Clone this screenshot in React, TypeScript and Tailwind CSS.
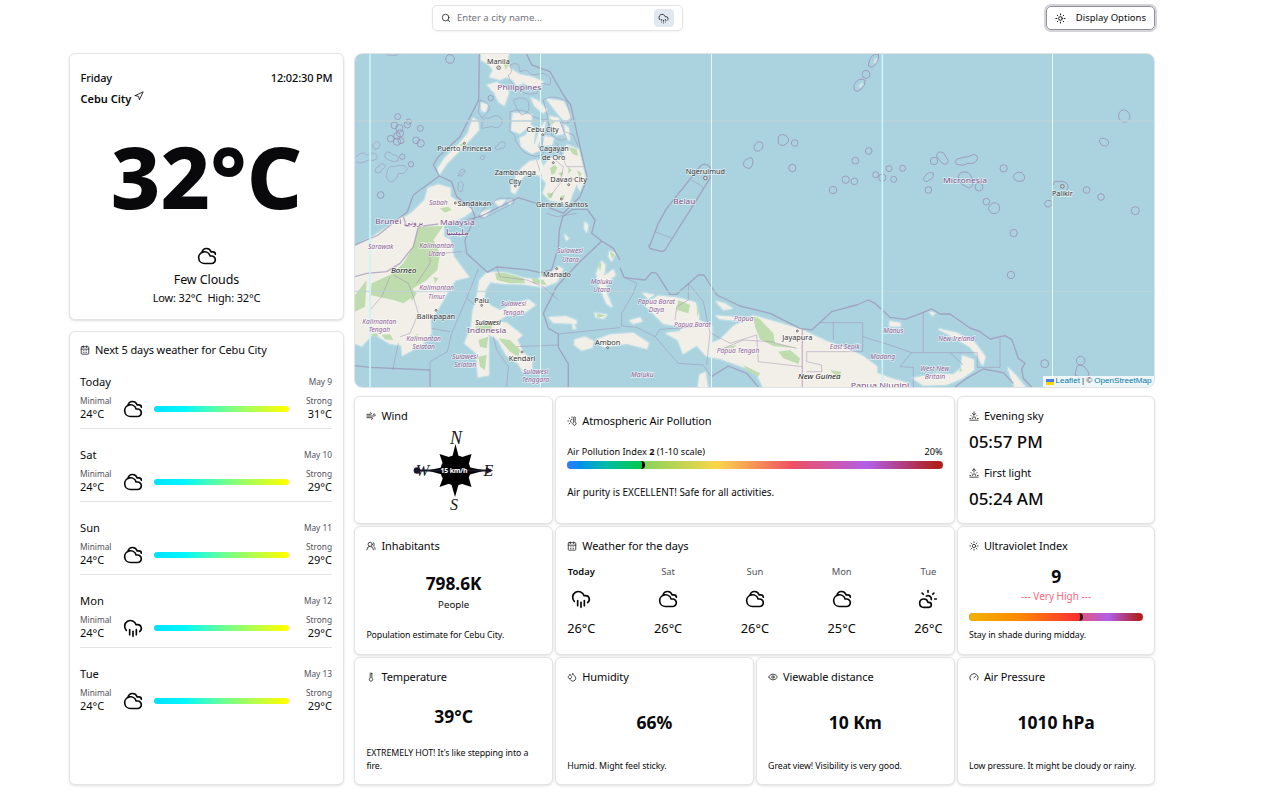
import React from "react";
import {
  CalendarDays, CloudHail, CloudRain, CloudSun, Cloudy, Droplets, Eye, Gauge, Navigation,
  Search, Sun, Sunrise, Sunset, Thermometer, ThermometerSun, UsersRound, Wind,
} from "lucide-react";

type IconType = React.ComponentType<{ size?: number; strokeWidth?: number; className?: string }>;

const card = "rounded-[6px] border border-[#e4e4e7] bg-white shadow-sm";
const note = "text-[8.800px] leading-[13px] tracking-[-0.09px]";

function Title({ icon: Icon, children, className = "" }: { icon: IconType; children: React.ReactNode; className?: string }) {
  return (
    <div className={`flex h-4 items-center gap-[5px] text-[11px] leading-4 tracking-[-0.1px] ${className}`}>
      <Icon size={10} className="shrink-0 text-[#27272a]" />
      <span className="whitespace-nowrap">{children}</span>
    </div>
  );
}

/* ---------- map ---------- */

type Label = [string, number, number, number];

const cities: Label[] = [
  ["Manila", 445, 42, 68], ["Cebu City", 578, 247, 97], ["Puerto Princesa", 343, 304, 162],
  ["Cagayan", 612, 304, 88], ["de Oro", 611, 330, 70], ["Zamboanga", 496, 376, 124], ["City", 495, 403, 38],
  ["Davao City", 656, 395, 110], ["General Santos", 636, 471, 156], ["Sandakan", 373, 467, 101],
  ["Manado", 621, 681, 84], ["Palu", 395, 758, 44], ["Balikpapan", 258, 807, 115], ["Kendari", 516, 932, 80],
  ["Ambon", 773, 886, 76], ["Ngerulmud", 1066, 372, 118], ["Jayapura", 1342, 869, 90], ["Palikir", 2137, 437, 62],
];
const countries: Label[] = [
  ["Philippines", 508, 120, 132], ["Brunei", 115, 523, 78], ["بروني", 190, 525, 56], ["Malaysia", 322, 526, 104],
  ["مليسيا", 322, 556, 70], ["Indonesia", 410, 848, 118], ["Belau", 1003, 461, 66], ["Micronesia", 1845, 399, 132],
  ["Papua Niugini", 1590, 1015, 176],
];
const regions: Label[] = [
  ["Sabah", 265, 466, 56], ["Sarawak", 92, 597, 76], ["Kalimantan", 260, 593, 104], ["Utara", 260, 617, 50],
  ["Kalimantan", 260, 720, 104], ["Timur", 260, 746, 50], ["Kalimantan", 88, 821, 102], ["Tengah", 88, 845, 64],
  ["Kalimantan", 221, 874, 104], ["Selatan", 221, 898, 68], ["Sulawesi", 660, 609, 78], ["Utara", 661, 635, 50],
  ["Maluku", 755, 702, 66], ["Utara", 755, 727, 50], ["Sulawesi", 490, 769, 76], ["Tengah", 490, 794, 64],
  ["Sulawesi", 345, 928, 78], ["Selatan", 345, 952, 66], ["Sulawesi", 557, 972, 76], ["Tenggara", 557, 996, 82],
  ["Papua Barat", 919, 761, 112], ["Daya", 919, 785, 46], ["Papua Barat", 1027, 832, 110], ["Papua", 1181, 814, 58],
  ["Papua Tengah", 1164, 908, 128], ["Maluku", 877, 982, 68], ["East Sepik", 1484, 897, 90], ["Manus", 1630, 848, 60],
  ["Madang", 1598, 928, 74], ["New Ireland", 1819, 874, 108], ["West New", 1754, 963, 86], ["Britain", 1755, 987, 62],
];
const islands: Label[] = [["Borneo", 161, 669, 76], ["Sulawesi", 414, 824, 76], ["New Guinea", 1408, 987, 128]];

const rings: [number, number, number][] = [
  [300, 27, 13], [143, 200, 9], [133, 226, 10], [148, 235, 11], [172, 224, 10], [176, 215, 8], [122, 266, 10],
  [141, 258, 10], [150, 250, 11], [141, 275, 11], [153, 272, 9], [211, 235, 9], [198, 271, 10], [212, 280, 11],
  [157, 320, 8], [183, 343, 8], [92, 435, 10], [422, 144, 8],
  [1334, 279, 10], [1327, 354, 11], [1556, 303, 10], [1516, 332, 10], [1487, 389, 11], [1513, 394, 10], [1449, 420, 11],
  [1577, 374, 9], [1597, 383, 11], [1617, 356, 9], [1631, 388, 9], [1658, 355, 9], [1752, 333, 11], [1735, 420, 10],
  [1961, 355, 11], [1909, 455, 10], [1991, 549, 11], [1983, 675, 11], [2084, 941, 12], [2192, 932, 13],
  [2210, 420, 10], [2253, 441, 10], [2356, 482, 12], [1548, 73, 12], [1887, 411, 12],
];

const borders = [
  "M388 12L386 150L330 260L265 320L250 345L268 378L305 395L320 440L365 475L375 500L345 570L350 610L412 667L440 651L530 659L570 668L605 660L625 590L628 540L638 500L668 478L712 478L735 510L725 550L755 573L790 595L810 630",
  "M15 585L85 555L140 510L172 485L190 435L268 378",
  "M530 12L545 45L600 65L640 135L662 165L690 290L712 385L690 440L640 490L590 470L505 443L440 475L390 500L350 510",
  "M755 573L680 645L620 710L580 790L595 835L625 852L625 892L655 942L655 1011",
  "M810 653L823 683L885 690L905 667L920 670L960 733L980 733L1045 675L1062 675L1100 735L1170 768L1260 790L1350 835L1385 840L1445 785L1520 765L1555 750L1575 760L1620 802L1665 808L1720 787L1745 777L1770 792L1800 792L1860 834L1890 845L1920 867L1965 857L1985 868L2005 925L2025 940L2015 955L2020 985L2045 1011",
  "M1084 980L1135 948L1190 970L1225 1011",
  "M1815 1011L1850 985L1900 957L1960 968L1990 1000",
  "M15 947L60 952L240 960L240 1011",
  "M898 590L925 520L950 475L1050 350Q1062 335 1080 350L1080 385L945 600Q938 608 925 602L905 597Q895 595 898 585Z",
];
const thinBorders = [
  "M385 655L350 745L305 850L292 905L240 935L240 960", "M350 745L375 765", "M245 835L300 845", "M145 880L128 960",
  "M440 650L450 680L530 690L580 710L625 750", "M430 860L440 900L475 950L470 1011", "M500 890L625 885",
  "M625 852L810 833", "M825 683L860 700L850 730L815 790L815 828L860 832L915 860L985 940L1060 945L1084 980",
  "M1015 700L1015 750L980 770L975 810", "M1015 700L1060 755L1080 850L1070 945", "M1040 830L930 838L915 860",
  "M1450 818L1450 870M1410 818L1538 818L1538 905L1370 905L1370 935L1415 945L1415 965L1370 965", "M1538 860L1620 885L1685 908L1882 908L1882 952L1950 952L1950 865",
  "M1720 787L1720 908", "M1685 908L1650 950L1690 952L1690 1011", "M1800 908L1840 945", "M915 545L965 565M1025 390L1050 405L1062 415",
  "M1084 850L1140 880L1220 855L1225 935L1357 950", "M1110 900L1180 870L1260 875L1340 895",
  "M480 45Q510 30 510 65L530 60L545 75L580 70Q610 80 600 105L575 100L560 130Q520 140 500 110Q480 100 475 75Q490 70 480 45Z",
  "M490 150Q520 135 535 155Q545 190 515 195L500 175Z", "M390 150Q420 155 418 180L395 205L385 185Z", "M395 235Q395 195 415 205Q450 185 458 215Q450 240 425 230Z",
  "M480 185Q520 170 550 200L580 210Q600 200 595 240L575 260L580 310Q560 330 520 305L495 270Q500 255 480 245Z",
  "M580 150Q610 130 650 155L665 210Q655 225 630 215L650 265Q630 280 605 255L590 190Z",
  "M645 245L670 255L685 290M560 330L575 380M620 280L650 350L700 350", "M615 330L640 350L630 400L600 440M660 380L690 400",
  "M445 285Q450 270 465 278Q470 292 455 295L440 300Q430 290 445 285ZM390 325Q395 312 405 318Q405 328 395 330Z",
  "M328 375L345 360M325 378Q325 365 335 358Q345 355 345 368L335 378ZM325 400Q335 385 340 405L335 425Q320 430 325 400Z",
  "M385 500Q400 465 430 460Q440 440 465 445Q500 440 490 460L440 485L400 505Z",
  "M18 322Q35 300 50 315Q75 300 82 320Q80 335 55 330Q30 345 18 335M105 310Q115 300 130 315Q145 312 145 332Q125 340 105 322ZM75 365Q75 350 88 350Q90 338 102 342Q110 352 97 358Q90 375 75 365ZM110 370Q115 345 130 350Q165 340 172 355Q165 375 145 370Q140 395 120 395Q105 385 110 370ZM68 292Q68 275 85 275Q95 285 85 295Q75 302 68 292Z",
  "M110 14Q130 20 145 14", "M590 490L620 500L680 490",
];
const atolls = [
  "M1212 290Q1220 270 1235 277Q1245 290 1230 302Q1210 308 1212 290ZM1285 265Q1285 250 1305 255Q1320 265 1315 275Q1300 295 1285 280ZM1180 340Q1185 325 1205 323Q1215 340 1200 355Q1180 355 1180 340Z",
  "M1555 45Q1560 10 1585 12Q1590 30 1570 50Q1558 55 1555 45ZM1512 105Q1525 80 1545 90Q1548 105 1533 118Q1510 135 1512 105Z",
  "M1760 320Q1760 300 1780 308L1795 332Q1790 350 1775 338ZM1820 328Q1840 320 1855 320Q1880 305 1883 325Q1875 345 1855 340Q1840 350 1820 343Q1812 335 1820 328ZM1720 385Q1735 360 1750 370Q1752 385 1737 390Q1725 402 1720 385ZM1825 380Q1830 360 1855 368Q1870 380 1868 405Q1860 420 1845 408Q1825 400 1825 380Z",
  "M1990 380Q1995 363 2015 368Q2030 380 2020 392Q1995 400 1990 380ZM1915 475Q1925 450 1945 462Q1955 480 1940 490Q1920 495 1915 475ZM2083 460Q2090 445 2108 455Q2105 475 2088 470ZM2110 405Q2110 390 2125 395Q2140 390 2150 400Q2160 415 2148 420M2305 197Q2310 173 2330 182Q2345 195 2338 208Q2325 225 2308 208ZM2248 270Q2255 260 2270 268Q2282 280 2270 288Q2250 290 2248 270ZM2180 950Q2190 940 2205 952L2217 970Q2215 985 2195 985L2175 975Z",
];

const land = [
  "M395 12L475 12L468 40L485 60L510 75L545 82L578 95L570 112L545 108L520 98L500 105L490 90L470 80L450 88L420 80L430 60L415 40L395 30Z",
  "M413 105L440 98L467 115L475 130L462 165L447 155L435 130Z",
  "M592 148L640 155L662 200L645 215L620 185Z", "M600 200L625 205L640 250L620 255L605 225Z", "M545 145L562 152L590 180L580 188L555 168Z",
  "M490 190L545 195L540 225L510 250L485 240Z", "M540 225L555 235L550 280L570 300L545 310L515 290L510 265L530 255Z",
  "M585 215L580 250L560 290L555 285L570 240Z", "M585 260L610 265L605 285L580 285Z",
  "M370 205L383 215L385 240L340 290L290 340L268 372L265 355L285 325L330 280L355 250Z", "M395 160L412 165L405 185L395 180Z",
  "M497 380L515 355L540 335L570 330L580 350L600 325L640 320L650 285L685 300L695 340L705 380L690 420L680 400L665 435L655 465L635 455L600 450L580 430L590 400L570 375L530 370L505 395Z",
  "M485 405L505 410L495 430L485 425Z", "M645 225L655 235L658 270L648 260Z", "M435 455L465 450L450 470ZM390 490L420 480L405 500Z",
  "M170 500L190 485L225 450L235 415L265 405L300 415L300 440L330 460L368 480L345 497L330 505L280 525L280 560L300 570L310 620L355 680L315 690L290 730L270 765L255 790L240 810L243 850L215 885L158 915L155 885L120 880L70 850L35 887L15 880L15 590L60 567L100 540L150 505Z",
  "M390 690L410 670L430 668L470 670L520 685L560 690L600 670L625 650L638 658L620 695L580 710L520 702L460 700L420 695L405 720L400 750L425 770L450 782L500 760L535 750L555 765L520 790L470 795L435 815L470 820L515 855L500 870L520 910L545 930L545 955L520 965L505 940L470 915L445 870L430 860L415 850L415 910L415 975L385 980L380 910L345 880L365 830L370 780L380 750Z",
  "M740 670L755 635L765 645L760 680L790 660L795 675L770 695L765 720L785 770L770 760L750 710ZM780 605L795 610L785 632L777 620Z",
  "M735 790L770 795L760 805L738 800Z", "M598 803L648 800L678 812L678 820L610 817ZM668 815L676 835L670 835Z", "M675 870L705 862L730 874L725 892L695 900L675 885Z",
  "M740 870L780 855L850 850L895 880L890 895L830 880L760 890Z", "M705 518L713 525L710 545L704 535ZM645 555L655 565L650 570Z",
  "M885 765L925 738L985 745L1035 758L1045 790L1045 810L1085 832L1085 880L1110 870L1150 830L1210 798L1260 812L1350 838L1430 875L1510 905L1540 920L1580 950L1580 970L1620 985L1670 1000L1680 1011L1240 1011L1220 970L1180 950L1110 925L1070 918L1040 885L1000 910L985 870L950 850L990 845L1000 830L940 820L910 790Z",
  "M1100 755L1125 762L1145 775L1120 778Z", "M1100 798L1180 804L1175 812L1110 806Z", "M1045 1011L1050 975L1065 968L1072 1011ZM840 812L870 804L875 814L850 820ZM880 730L910 735L895 745Z",
  "M1690 985L1760 972L1810 975L1835 955L1838 918L1870 930L1870 960L1835 985L1790 1003L1720 1005Z",
  "M1768 838L1820 850L1875 880L1905 920L1898 945L1885 920L1860 890L1810 860Z", "M1975 955L1995 975L2025 1011L1995 1011Z",
  "M1620 815L1650 820L1650 828L1620 828ZM1740 787L1753 790L1748 796Z", "M475 455L485 452L480 462ZM1580 25L1574 40M1538 100L1528 112",
];
const forest = [
  "M205 530L280 528L250 570L270 610L262 660L230 690L190 715L190 740L160 760L130 750L60 735L65 700L120 675L160 640L190 590Z",
  "M15 735L50 690L45 770L15 785Z", "M180 715L200 730L185 755Z",
  "M435 668L470 670L520 685L525 700L480 700L440 690ZM545 685L580 690L590 705L550 700Z", "M445 865L480 870L510 900L505 920L480 905Z",
  "M385 870L415 860L410 895L390 890ZM385 920L410 915L405 960L390 950Z", "M375 830L430 820L420 845L385 845Z",
  "M745 640L755 640L750 665ZM780 605L794 612L786 628ZM740 790L768 797L742 803Z",
  "M985 750L1020 765L1015 790L980 780ZM1040 770L1048 785L1042 800Z", "M1210 798L1230 808L1270 850L1275 880L1340 895L1270 888L1230 868L1215 830Z",
  "M1285 905L1320 900L1350 925L1345 942L1300 925Z", "M1110 895L1160 885L1150 895ZM1440 960L1475 965L1465 985ZM1180 945L1230 970L1225 980L1190 960Z",
  "M600 355L612 345L622 352L615 370L605 375ZM625 370L640 365L635 380ZM655 290L680 298L685 318L668 312ZM590 430L610 428L605 445L595 445ZM630 440L645 435L640 450ZM680 360L695 370L690 385Z",
  "M270 475L295 470L305 480L285 488ZM325 285L350 275L340 290ZM600 205L615 215L605 225ZM655 350L665 360L655 372Z", "M1830 955L1838 960L1828 968ZM460 40L475 45L468 60ZM60 855L80 848L85 860ZM95 855L120 852L130 870L105 868ZM250 680L265 685L255 700ZM190 860L205 850L200 870Z",
];

function Names({ list, className, size }: { list: Label[]; className: string; size: number }) {
  return (
    <g className={className} fontSize={size} textAnchor="middle">
      {list.map(([t, x, y, w]) => (
        <text key={`${t}-${x}-${y}`} x={x} y={y} textLength={w} lengthAdjust="spacingAndGlyphs" stroke="#ffffff" strokeOpacity={0.65} strokeWidth={4} paintOrder="stroke">{t}</text>
      ))}
    </g>
  );
}

function WorldMap() {
  return (
    <svg viewBox="15 12 2397 999" preserveAspectRatio="none" className="block h-full w-full">
      <rect x="15" y="12" width="2397" height="999" fill="#aad3df" />
      <g fill="none" stroke="#bcdde6" strokeWidth="11" strokeLinejoin="round">{land.map((d) => <path key={d} d={d} />)}</g>
      <g fill="#f2efe9" stroke="#f2efe9" strokeWidth="3" strokeLinejoin="round">{land.map((d) => <path key={d} d={d} />)}</g>
      <g fill="#bfdcae">{forest.map((d) => <path key={d} d={d} />)}</g>
      <g fill="none" stroke="#9c86b0" strokeWidth="3" strokeOpacity="0.45" strokeLinejoin="round">
        {thinBorders.map((d) => <path key={d} d={d} />)}
        <path d="M130 675L175 700L190 740M190 740L205 790L180 850L150 860M120 680L95 740L60 780M240 600L240 640L200 700M270 610L335 605" />
      </g>
      <g fill="none" stroke="#9a8ab0" strokeWidth="4" strokeOpacity="0.65" strokeLinejoin="round">
        {borders.map((d) => <path key={d} d={d} />)}
        <path d="M15 680L50 670L110 665L150 640L190 590L205 530L265 522M160 500L170 530L185 525" />
        <path d="M1357 838V1011" stroke="#b795b8" />
      </g>
      <g fill="none" stroke="#9a8fb4" strokeWidth="3" strokeOpacity="0.8">
        {atolls.map((d) => <path key={d} d={d} />)}
        {rings.map(([x, y, r]) => <circle key={`${x}-${y}`} cx={x} cy={y} r={r} />)}
      </g>
      <path d="M15 213H2412" stroke="#bdd2da" strokeWidth="5" />
      <path d="M15 724H2412" stroke="#bdd2da" strokeWidth="3" />
      <path d="M60 12V1011M1597 12V1011" stroke="#c9f3f8" strokeWidth="5" />
      <path d="M571.500 12V1011M1084.500 12V1011M2107.500 12V1011" stroke="#e2fafb" strokeWidth="3.2" shapeRendering="crispEdges" />
      <g fill="#d8d4d0" stroke="#55504c" strokeWidth="2">
        {[[446, 53], [578, 254], [343, 280], [610, 338], [496, 408], [656, 404], [634, 447], [316, 459], [620, 656], [395, 766], [258, 781], [516, 906], [773, 893], [1066, 384], [1342, 843], [2137, 409]].map(([x, y]) => (
          <circle key={`${x}-${y}`} cx={x} cy={y} r={x === 446 || x === 1066 || x === 2137 ? 5.5 : 3} />
        ))}
      </g>
      <Names list={regions} size={20} className="fill-[#8d5f95] italic" />
      <Names list={countries} size={23} className="fill-[#7d5288]" />
      <Names list={cities} size={22} className="fill-[#33312f]" />
      <Names list={islands} size={22} className="fill-[#111111] italic" />
    </svg>
  );
}

/* ---------- small pieces ---------- */

function Compass() {
  return (
    <svg width="84" height="88" viewBox="0 -2 84 88">
      <g fontFamily="'Liberation Serif', serif" fontStyle="italic" textAnchor="middle" fill="#18181b">
        <text x="43" y="13.500" fontSize="18">N</text>
        <text x="41" y="80" fontSize="16">S</text>
        <text x="9.500" y="46" fontSize="16">W</text>
        <text x="75.500" y="46" fontSize="16">E</text>
      </g>
      <path fill="#000" d="M42.500 14L46 28L58.500 24L55 37L72 40.500L55 45L58.500 57L46 53L42 67L38 53L26.500 57L31 45L14 40.500L31 37L26.500 24L39 28Z" />
      <circle cx="42.500" cy="40.500" r="15" fill="#000" />
      <path d="M3 40.500H76" stroke="#18182a" strokeWidth="1.800" />
      <circle cx="4" cy="40.500" r="3.300" fill="#18182a" />
      <path d="M73 37L80 40.500L73 44Z" fill="#18182a" />
      <text x="41" y="43" textAnchor="middle" fontSize="6.900" fontWeight="700" fill="#fff" textLength="27">15 km/h</text>
    </svg>
  );
}

const days: [string, string, string, IconType][] = [
  ["Today", "May 9", "31°C", Cloudy], ["Sat", "May 10", "29°C", Cloudy], ["Sun", "May 11", "29°C", Cloudy],
  ["Mon", "May 12", "29°C", CloudRain], ["Tue", "May 13", "29°C", Cloudy],
];
const outlook: [string, string, IconType][] = [
  ["Today", "26°C", CloudRain], ["Sat", "26°C", Cloudy], ["Sun", "26°C", Cloudy], ["Mon", "25°C", Cloudy], ["Tue", "26°C", CloudSun],
];

function Stat({ icon, title, value, text }: { icon: IconType; title: string; value: string; text: string }) {
  return (
    <section className={`${card} flex flex-col px-[11px] pt-[11px] pb-[11px]`}>
      <Title icon={icon}>{title}</Title>
      <div className="flex flex-1 items-center justify-center text-[17.500px] leading-6 font-bold">{value}</div>
      <p className={note}>{text}</p>
    </section>
  );
}

export default function App() {
  return (
    <div className="h-[799px] overflow-hidden bg-white pl-[69px] text-[#09090b] [font-family:'Noto_Sans',sans-serif]">
      <header className="flex h-[53px] w-[1086px] items-start pt-[5px]">
        <div className="ml-[363px] flex h-[26px] w-[251px] items-center rounded-[5px] border border-[#e4e4e7] px-2 shadow-xs">
          <Search size={10} className="text-[#27272a]" />
          <span className="ml-[6px] flex-1 text-[9.500px] text-[#71717a]">Enter a city name...</span>
          <span className="flex h-[18px] w-5 items-center justify-center rounded-[4px] bg-[#e2e8f0]">
            <CloudHail size={11} className="mr-[2px] text-[#27272a]" />
          </span>
        </div>
        <button className="mt-px ml-auto flex h-6 w-[109px] items-center justify-between rounded-[5px] border border-[#8f8f98] px-2 text-[9.500px] ring-2 ring-[#d4d4d8]">
          <Sun size={11} />
          <span>Display Options</span>
        </button>
      </header>

      <main className="flex w-[1086.400px] gap-[10.400px]">
        <div className="flex w-[275px] flex-col gap-[11px]">
          <section className={`${card} h-[267px] px-[10.500px] pt-4`}>
            <div className="flex justify-between text-[11px] leading-4 font-medium">
              <span className="tracking-[-0.150px]">Friday</span>
              <span className="tracking-[-0.150px]">12:02:30 PM</span>
            </div>
            <div className="mt-[5px] flex h-4 gap-[3px] text-[11px] leading-4 font-semibold">
              <span>Cebu City</span>
              <Navigation size={10} />
            </div>
            <div className="mt-[21px] text-center text-[86px] leading-[96px] font-extrabold">32°C</div>
            <div className="mt-[22px] flex flex-col items-center">
              <Cloudy size={20} />
              <span className="mt-[5px] text-[12.500px] leading-[18px] tracking-[-0.1px]">Few Clouds</span>
              <span className="mt-px text-[11px] leading-4 tracking-[-0.180px] whitespace-pre">Low: 32°C  High: 32°C</span>
            </div>
          </section>

          <section className={`${card} h-[454px] pt-[10px] pr-[11px] pl-[10px]`}>
            <Title icon={CalendarDays}>Next 5 days weather for Cebu City</Title>
            <div className="mt-4">
              {days.map(([day, date, high, Icon], i) => (
                <div key={day} className="h-[73px]">
                  <div className={`h-[55px] ${i < 4 ? "border-b border-[#e4e4e7]" : ""}`}>
                    <div className="flex h-4 items-center justify-between">
                      <span className="text-[11.200px]">{day}</span>
                      <span className="text-[8.300px] leading-4 text-[#52525b]">{date}</span>
                    </div>
                    <div className="mt-[5px] flex h-7 items-center">
                      <div className="w-[43px] pb-[3px]">
                        <div className="text-[8.300px] leading-3 text-[#52525b]">Minimal</div>
                        <div className="text-[11px] leading-[13px]">24°C</div>
                      </div>
                      <Icon size={20} />
                      <div className="ml-[11px] h-[6px] w-[135px] rounded-full bg-[linear-gradient(90deg,#00e1ff_0%,#00f6ff_22%,#6dff92_52%,#a8ff57_70%,#ffff00_98%)]" />
                      <div className="ml-auto pb-[3px] text-right">
                        <div className="text-[8.300px] leading-3 text-[#52525b]">Strong</div>
                        <div className="text-[11px] leading-[13px]">{high}</div>
                      </div>
                    </div>
                  </div>
                </div>
              ))}
            </div>
          </section>
        </div>

        <div className="flex w-[801px] flex-col gap-2">
          <section className="relative h-[335px] overflow-hidden rounded-[8px] border border-[#dfe3e6]">
            <WorldMap />
            <div className="absolute right-0 bottom-0 flex h-[11px] items-center gap-[2px] bg-white/80 px-[3px] text-[8.100px] text-[#0078a8] [font-family:'Liberation_Sans',sans-serif]">
              <span className="flex h-[6px] w-2 flex-col"><i className="flex-1 bg-[#4c7be1]" /><i className="flex-1 bg-[#ffd500]" /></span>
              <span>Leaflet</span>
              <span className="text-[#333]">| ©</span>
              <span>OpenStreetMap</span>
            </div>
          </section>

          <div className="grid h-[389px] grid-cols-4 grid-rows-3 gap-[2.400px]">
            <section className={`${card} px-[11px] pt-[11px]`}>
              <Title icon={Wind}>Wind</Title>
              <div className="mt-[4px] ml-[47px]"><Compass /></div>
            </section>

            <section className={`${card} col-span-2 px-[11px] pt-4`}>
              <Title icon={ThermometerSun}>Atmospheric Air Pollution</Title>
              <div className="mt-4 flex justify-between text-[9.200px] leading-[14px]">
                <span>Air Pollution Index <b className="font-bold">2</b> (1-10 scale)</span>
                <span>20%</span>
              </div>
              <div className="mt-[2px] h-2 overflow-hidden rounded-full bg-[linear-gradient(90deg,#84d35a_20%,#fad64a_40%,#ef4f63_60%,#b160e8_80%,#b0201f_98%)]">
                <div className="h-full w-[20.800%] rounded-r-full border-r-[3px] border-black bg-[linear-gradient(90deg,#2b7fff_5%,#0092e8_18%,#00bba7_52%,#00c951_95%)]" />
              </div>
              <p className="mt-4 text-[9.900px] leading-[15px]">Air purity is EXCELLENT! Safe for all activities.</p>
            </section>

            <section className={`${card} px-[11px] pt-[11px]`}>
              <Title icon={Sunset}>Evening sky</Title>
              <div className="mt-[6px] h-6 text-[17px] leading-6 font-medium">05:57 PM</div>
              <Title icon={Sunrise} className="mt-[11px]">First light</Title>
              <div className="mt-[6px] h-6 text-[17px] leading-6 font-medium">05:24 AM</div>
            </section>

            <section className={`${card} px-[11px] pt-[11px]`}>
              <Title icon={UsersRound}>Inhabitants</Title>
              <div className="mt-[18px] text-center text-[17.300px] leading-6 font-bold">798.6K</div>
              <div className="mt-[2px] text-center text-[9.700px] leading-[14px]">People</div>
              <p className={`mt-[17px] ${note}`}>Population estimate for Cebu City.</p>
            </section>

            <section className={`${card} col-span-2 px-[11px] pt-[11px]`}>
              <Title icon={CalendarDays}>Weather for the days</Title>
              <div className="mt-[11px] flex justify-between">
                {outlook.map(([day, temp, Icon], i) => (
                  <div key={day} className="flex flex-col items-center">
                    <span className={`text-[9.400px] leading-[14px] ${i ? "text-[#52525b]" : "font-semibold"}`}>{day}</span>
                    <Icon size={20} className="mt-[10px]" />
                    <span className="mt-[10px] text-[12.800px] leading-[18px]">{temp}</span>
                  </div>
                ))}
              </div>
            </section>

            <section className={`${card} px-[11px] pt-[11px]`}>
              <Title icon={Sun}>Ultraviolet Index</Title>
              <div className="mt-[10px] text-center text-[17.500px] leading-6 font-bold">9</div>
              <div className="mt-px text-center text-[10px] leading-[14px] text-[#ff667f]">--- Very High ---</div>
              <div className="mt-[10px] h-2 overflow-hidden rounded-full bg-[linear-gradient(90deg,#ef4f63_60%,#b160e8_80%,#b0201f_98%)]">
                <div className="h-full w-[65.500%] rounded-r-full border-r-[3px] border-[#18181b] bg-[linear-gradient(90deg,#f0b100_0%,#fe8a00_45%,#fb2c36_100%)]" />
              </div>
              <p className={`mt-2 ${note}`}>Stay in shade during midday.</p>
            </section>

            <Stat icon={Thermometer} title="Temperature" value="39°C" text="EXTREMELY HOT! It's like stepping into a fire." />
            <Stat icon={Droplets} title="Humidity" value="66%" text="Humid. Might feel sticky." />
            <Stat icon={Eye} title="Viewable distance" value="10 Km" text="Great view! Visibility is very good." />
            <Stat icon={Gauge} title="Air Pressure" value="1010 hPa" text="Low pressure. It might be cloudy or rainy." />
          </div>
        </div>
      </main>
    </div>
  );
}
